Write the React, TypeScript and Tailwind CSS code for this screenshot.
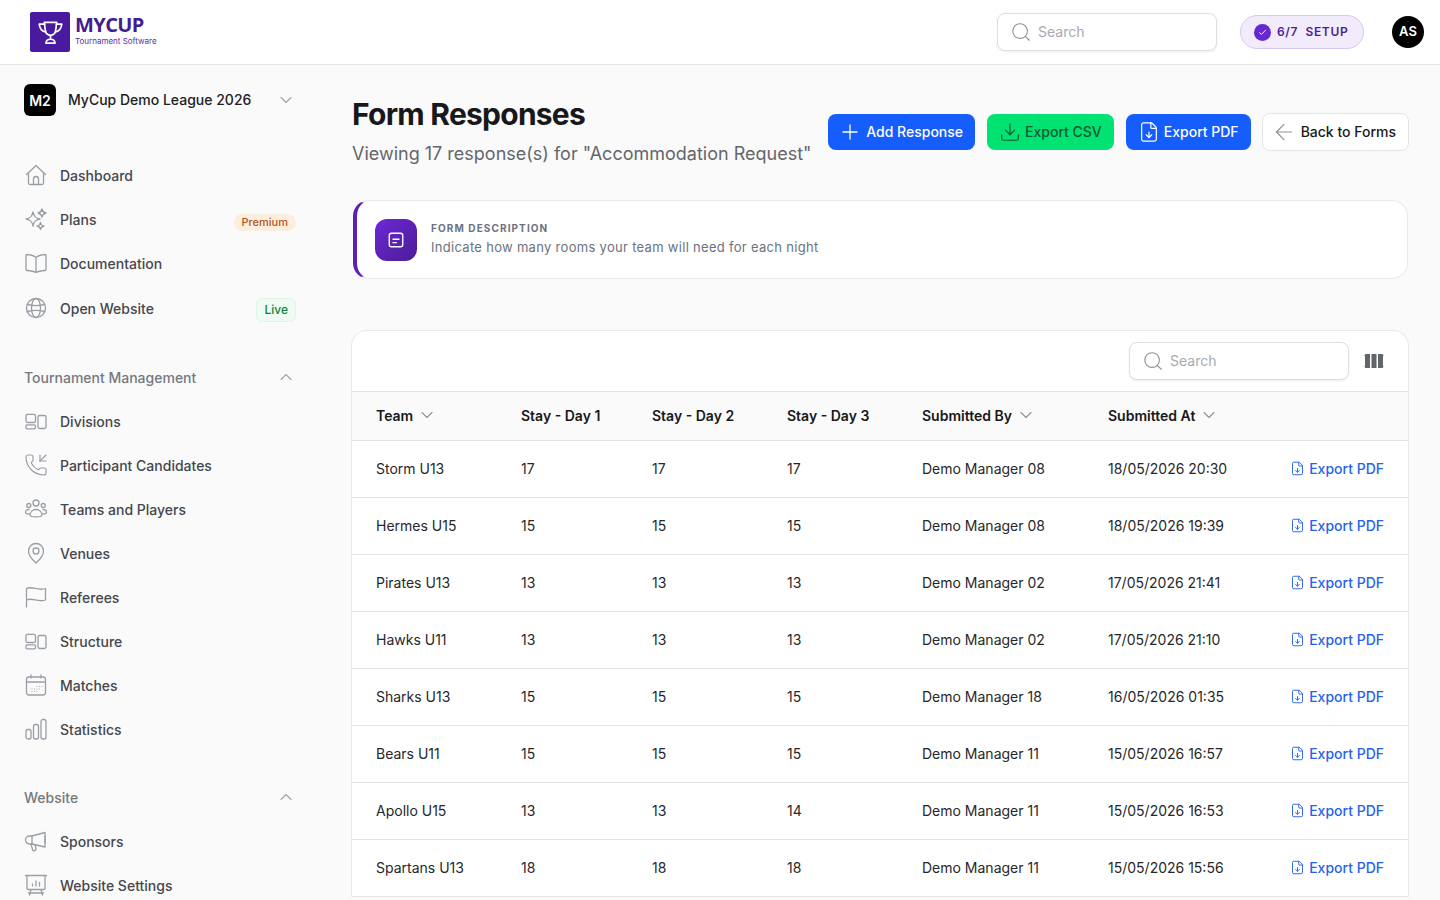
import { ChevronDown, ChevronUp, Plus, Download, ArrowLeft, Search, Check, FileDown, PhoneIncoming } from "lucide-react";
import type { ReactNode } from "react";

const Ico = ({ children, className = "text-[#9a9ea6]" }: { children: ReactNode; className?: string }) => (
  <svg viewBox="0 0 24 24" fill="none" stroke="currentColor" strokeWidth="1.3" strokeLinecap="round" strokeLinejoin="round" className={`h-6 w-6 shrink-0 ${className}`}>
    {children}
  </svg>
);

const HomeIcon = () => (
  <Ico>
    <path d="M2.500 11.500 12 2.500l9.500 9M4.500 10v10a1.500 1.500 0 0 0 1.500 1.500h12a1.500 1.500 0 0 0 1.500-1.500V10" />
    <path d="M9.500 21.500V16a2.500 2.500 0 0 1 5 0v5.500" />
  </Ico>
);
const SparkIcon = () => (
  <Ico>
    <path d="M9 5c.9 4.500 2.500 6.100 7 7-4.500.9-6.100 2.500-7 7-.9-4.500-2.500-6.100-7-7 4.500-.9 6.100-2.500 7-7Z" />
    <path d="M18 2c.5 2.500 1.500 3.500 4 4-2.500.5-3.500 1.500-4 4-.5-2.500-1.500-3.500-4-4 2.500-.5 3.500-1.500 4-4Z" />
    <path d="M16.500 15.500c.4 2.200 1.300 3.100 3.500 3.500-2.200.4-3.100 1.300-3.500 3.500-.4-2.200-1.300-3.100-3.500-3.500 2.200-.4 3.100-1.300 3.500-3.500Z" />
  </Ico>
);
const BookIcon = () => (
  <Ico>
    <path d="M12 6.500v15M12 6.500C10 4.500 7 3.800 3 3.500c-.5 0-1 .4-1 1v14c0 .5.400 1 1 1 4 .2 7 .8 9 2 2-1.200 5-1.800 9-2 .6 0 1-.5 1-1v-14c0-.6-.5-1-1-1-4 .3-7 1-9 3Z" />
  </Ico>
);
const GlobeIcon = () => (
  <Ico>
    <circle cx="12" cy="12" r="9.500" />
    <ellipse cx="12" cy="12" rx="4.500" ry="9.500" />
    <path d="M3.200 8.500c5 1.300 12.600 1.300 17.600 0M3.200 15.500c5-1.300 12.600-1.300 17.600 0" />
  </Ico>
);
const LayoutIcon = () => (
  <Ico>
    <rect x="2" y="5.300" width="9.500" height="8.200" rx="1.500" />
    <rect x="2" y="15.800" width="9.500" height="4" rx="1.300" />
    <rect x="14" y="6.500" width="8" height="13" rx="1.800" />
  </Ico>
);
const TeamIcon = () => (
  <Ico>
    <circle cx="12" cy="6" r="3" />
    <circle cx="4.800" cy="8.500" r="2" />
    <circle cx="19.200" cy="8.500" r="2" />
    <path d="M6 18c0-3 2.500-5.500 6-5.500s6 2.500 6 5.500c0 2.500-12 2.500-12 0Z" />
    <path d="M5 12.500c-2 0-3.500 1.300-3.500 3 0 1 1.500 1.500 3.500 1.500M19 12.500c2 0 3.500 1.300 3.500 3 0 1-1.500 1.500-3.500 1.500" />
  </Ico>
);
const PinIcon = () => (
  <Ico>
    <path d="M12 22c-4-3.500-7.500-7.500-7.500-12a7.500 7.500 0 0 1 15 0c0 4.500-3.500 8.500-7.500 12Z" />
    <circle cx="12" cy="10" r="3" />
  </Ico>
);
const FlagIcon = () => (
  <Ico>
    <path d="M2.500 22V3.500c6-3 11.500 3 19 0V15c-7.500 3-13-3-19 0" />
  </Ico>
);
const CalIcon = () => (
  <Ico>
    <rect x="2.500" y="4" width="19" height="18" rx="2.500" />
    <path d="M2.500 9h19M7 2v3M17 2v3" />
    <path d="M8 16v.01M10.500 16v.01M13 16v.01M15.500 16v.01M8 18.500v.01M10.500 18.500v.01M13 18.500v.01M15.500 13.500v.01M13 13.500v.01M18 13.500v.01" strokeWidth="1.100" />
  </Ico>
);
const BarsIcon = () => (
  <Ico>
    <rect x="2" y="12.500" width="5" height="9.500" rx="2" />
    <rect x="9.500" y="7.500" width="5" height="14.500" rx="2" />
    <rect x="17" y="2.500" width="5" height="19.500" rx="2" />
  </Ico>
);
const MegaIcon = () => (
  <Ico>
    <path d="M21 3.500v14.500L8 15H5.500a3.500 3.500 0 0 1 0-8H8l13-3.500Z" />
    <path d="M8 7v8M7 15l1.500 5.500c.5 2 3.500 1.500 3.500-.5l-.8-3.800" />
    <path d="M21 7v7" />
  </Ico>
);
const BoardIcon = () => (
  <Ico>
    <path d="M1.500 2.500h21M3 2.500v13a1 1 0 0 0 1 1h16a1 1 0 0 0 1-1v-13M7 16.500 5.500 22M17 16.500l1.500 5.500M4.500 20h15" />
    <path d="M8.500 13v-2M12 13V8M15.500 13v-3.500" />
  </Ico>
);

const NavItem = ({ icon, label, right }: { icon: ReactNode; label: string; right?: ReactNode }) => (
  <div className="flex h-6 items-center justify-between">
    <div className="flex items-center gap-3">
      {icon}
      <span className="text-[14px] font-medium text-[#45474d]">{label}</span>
    </div>
    {right}
  </div>
);

const GroupTitle = ({ label }: { label: string }) => (
  <div className="flex h-6 items-center justify-between">
    <span className="text-[14px] font-medium text-[#75787f]">{label}</span>
    <ChevronUp className="h-5 w-5 text-[#a1a4ab]" strokeWidth={1.3} />
  </div>
);

const Sidebar = () => (
  <aside className="w-[320px] shrink-0 px-6 pt-[19px]">
    <div className="flex items-center">
      <div className="flex h-8 w-8 items-center justify-center rounded-md bg-black text-[14px] font-semibold text-white">M2</div>
      <span className="mb-[2px] ml-3 text-[14px] font-medium text-[#1f2024]">MyCup Demo League 2026</span>
      <ChevronDown className="ml-auto h-5 w-5 text-[#a1a4ab]" strokeWidth={1.3} />
    </div>
    <div className="mt-[47px] flex flex-col gap-5">
      <NavItem icon={<HomeIcon />} label="Dashboard" />
      <NavItem
        icon={<SparkIcon />}
        label="Plans"
        right={<span className="mt-[6px] rounded-full bg-[#fbeedd] px-2 py-[1px] text-[11px] font-medium leading-[15px] text-[#b4561f]">Premium</span>}
      />
      <NavItem icon={<BookIcon />} label="Documentation" />
      <div className="mt-px">
        <NavItem
          icon={<GlobeIcon />}
          label="Open Website"
          right={<span className="mt-[3px] rounded-md border border-[#dcf5e4] bg-[#eefbf3] px-[7px] py-[2px] text-[12px] font-medium leading-[18px] text-[#15803d]">Live</span>}
        />
      </div>
    </div>
    <div className="mt-[45px] flex flex-col gap-5">
      <GroupTitle label="Tournament Management" />
      <NavItem icon={<LayoutIcon />} label="Divisions" />
      <NavItem icon={<PhoneIncoming className="h-6 w-6 shrink-0 text-[#9a9ea6]" strokeWidth={1.2} />} label="Participant Candidates" />
      <NavItem icon={<TeamIcon />} label="Teams and Players" />
      <NavItem icon={<PinIcon />} label="Venues" />
      <NavItem icon={<FlagIcon />} label="Referees" />
      <NavItem icon={<LayoutIcon />} label="Structure" />
      <NavItem icon={<CalIcon />} label="Matches" />
      <NavItem icon={<BarsIcon />} label="Statistics" />
    </div>
    <div className="mt-[44px] flex flex-col gap-5">
      <GroupTitle label="Website" />
      <NavItem icon={<MegaIcon />} label="Sponsors" />
      <NavItem icon={<BoardIcon />} label="Website Settings" />
    </div>
  </aside>
);

const SearchBox = () => (
  <div className="flex h-[38px] w-[220px] items-center gap-[6px] rounded-lg border border-[#dedfe3] bg-white px-3 shadow-[0_1px_2px_rgba(0,0,0,0.08)]">
    <Search className="h-[22px] w-[22px] text-[#8f9299]" strokeWidth={1.2} />
    <span className="mb-[2px] text-[14px] text-[#a9abb0]">Search</span>
  </div>
);

const Header = () => (
  <header className="flex h-[65px] shrink-0 items-center border-b border-[#e4e4e7] bg-white pl-[30px] pr-4">
    <div className="flex h-10 w-10 items-center justify-center rounded-[2px] bg-[#4a1a9e]">
      <svg viewBox="0 0 24 24" fill="none" stroke="white" strokeWidth="1.500" strokeLinecap="round" strokeLinejoin="round" className="h-[27px] w-[27px]">
        <path d="M6.500 3h11l-.8 6.500c-.4 3-2.200 5-4.700 5s-4.300-2-4.700-5L6.500 3Z" />
        <path d="M6.700 4.500H2c.3 3.500 2 6 5.500 7M17.300 4.500H22c-.3 3.500-2 6-5.500 7" />
        <path d="M12 14.500V18M8 21.500c0-2 1.500-3.500 4-3.500s4 1.500 4 3.500H8Z" />
      </svg>
    </div>
    <div className="mb-[3px] ml-[5px] flex flex-col">
      <span className="text-[20px] font-bold leading-[21px] tracking-[-0.03em] text-[#431c93]" style={{ fontFamily: "'Open Sans', sans-serif" }}>MYCUP</span>
      <span className="text-[8px] leading-[12px] text-[#5a2ea8]">Tournament Software</span>
    </div>
    <div className="ml-auto">
      <SearchBox />
    </div>
    <div className="ml-[23px] flex h-[34px] w-[124px] items-center gap-[6px] rounded-full border border-[#d6c8f2] bg-[#f2ebfc] pl-[13px]">
      <span className="flex h-[17px] w-[17px] items-center justify-center rounded-full bg-[#6429cf]">
        <Check className="h-[9px] w-[9px] text-white" strokeWidth={2.500} />
      </span>
      <span className="text-[12px] font-semibold tracking-[0.055em] text-[#4c1d95]">6/7&nbsp; SETUP</span>
    </div>
    <div className="ml-[28px] flex h-8 w-8 items-center justify-center rounded-full bg-black text-[13px] font-semibold text-white">AS</div>
  </header>
);

const btn = "flex h-9 items-center gap-1 whitespace-nowrap rounded-lg pb-px text-[14px] font-medium";

const TitleRow = () => (
  <div className="flex items-start justify-between">
    <div>
      <h1 className="-mt-px text-[30px] font-bold leading-[36px] tracking-[-0.025em] text-[#18181b]">Form Responses</h1>
      <p className="mt-2 whitespace-nowrap text-[18px] leading-[28px] text-[#64666c]">Viewing 17 response(s) for "Accommodation Request"</p>
    </div>
    <div className="-mr-px mt-4 flex items-center">
      <button className={`${btn} bg-[#155dfc] pl-[10px] pr-3 text-white`}>
        <Plus className="h-6 w-6" strokeWidth={1.300} />
        Add Response
      </button>
      <button className={`${btn} ml-3 bg-[#00e272] pl-3 pr-3 text-[#0a5a33]`}>
        <Download className="h-[22px] w-[22px]" strokeWidth={1.300} />
        Export CSV
      </button>
      <button className={`${btn} ml-3 bg-[#155dfc] pl-3 pr-3 text-white`}>
        <FileDown className="h-[22px] w-[22px]" strokeWidth={1.300} />
        Export PDF
      </button>
      <button className="ml-[11px] flex h-[38px] items-center gap-1 whitespace-nowrap rounded-lg border border-[#e4e4e7] bg-white pb-px pl-2 pr-3 text-[14px] font-medium text-[#18181b]">
        <ArrowLeft className="h-[26px] w-[26px] text-[#8f9299]" strokeWidth={1.100} />
        Back to Forms
      </button>
    </div>
  </div>
);

const DescCard = () => (
  <div className="ml-px mt-8 flex h-[79px] items-center rounded-2xl border border-l-4 border-[#e9e9ec] border-l-[#5b21b6] bg-white pl-[18px]">
    <div className="flex h-[42px] w-[42px] items-center justify-center rounded-xl bg-gradient-to-br from-[#6d28d9] to-[#4c1d95]">
      <svg viewBox="0 0 24 24" fill="none" stroke="white" strokeWidth="1.800" strokeLinecap="round" className="h-[18px] w-[18px]">
        <rect x="3" y="3" width="18" height="18" rx="3" />
        <path d="M8 11h8M8 15.500h4.500" />
      </svg>
    </div>
    <div className="ml-[14px] pb-[2px]">
      <div className="text-[10px] font-bold leading-[16px] tracking-[0.11em] text-[#6b7280]">FORM DESCRIPTION</div>
      <div className="mt-px text-[13px] leading-[20px] tracking-[0.3px] text-[#6b7280]">Indicate how many rooms your team will need for each night</div>
    </div>
  </div>
);

const rows = [
  ["Storm U13", "17", "17", "17", "Demo Manager 08", "18/05/2026 20:30"],
  ["Hermes U15", "15", "15", "15", "Demo Manager 08", "18/05/2026 19:39"],
  ["Pirates U13", "13", "13", "13", "Demo Manager 02", "17/05/2026 21:41"],
  ["Hawks U11", "13", "13", "13", "Demo Manager 02", "17/05/2026 21:10"],
  ["Sharks U13", "15", "15", "15", "Demo Manager 18", "16/05/2026 01:35"],
  ["Bears U11", "15", "15", "15", "Demo Manager 11", "15/05/2026 16:57"],
  ["Apollo U15", "13", "13", "14", "Demo Manager 11", "15/05/2026 16:53"],
  ["Spartans U13", "18", "18", "18", "Demo Manager 11", "15/05/2026 15:56"],
];

const heads: [string, boolean, string][] = [
  ["Team", true, "w-[145px]"],
  ["Stay - Day 1", false, "w-[131px]"],
  ["Stay - Day 2", false, "w-[135px]"],
  ["Stay - Day 3", false, "w-[135px]"],
  ["Submitted By", true, "w-[186px]"],
  ["Submitted At", true, "w-[182px]"],
];

const DataTable = () => (
  <div className="-mx-px mt-[51px] rounded-t-2xl border border-b-0 border-[#e9e9ec] bg-white">
    <div className="flex h-[60px] items-center justify-end gap-[15px] pr-6">
      <SearchBox />
      <svg viewBox="0 0 20 20" className="h-5 w-5 text-[#63656c]" fill="currentColor">
        <path d="M1 5.500A1.500 1.500 0 0 1 2.500 3H6v14H2.500A1.500 1.500 0 0 1 1 14.500v-9ZM7.500 3h5v14h-5V3ZM14 3h3.500A1.500 1.500 0 0 1 19 5.500v9a1.500 1.500 0 0 1-1.500 2.500H14V3Z" />
      </svg>
    </div>
    <table className="w-full table-fixed border-collapse text-left">
      <thead>
        <tr className="h-[49px] border-y border-[#e4e4e7] bg-[#fafafa]">
          {heads.map(([label, sort, w]) => (
            <th key={label} className={`${w} pb-[2px] pl-6 text-[14px] font-semibold text-[#18181b]`}>
              <span className="flex items-center gap-1">
                {label}
                {sort && <ChevronDown className="h-5 w-5 text-[#8f9299]" strokeWidth={1.300} />}
              </span>
            </th>
          ))}
          <th />
        </tr>
      </thead>
      <tbody>
        {rows.map((row) => (
          <tr key={row[0]} className="h-[57px] border-b border-[#e4e4e7]">
            {row.map((cell, i) => (
              <td key={i} className="pb-[2px] pl-6 text-[14px] text-[#27272a]">{cell}</td>
            ))}
            <td className="pb-[2px] pr-6">
              <span className="flex items-center justify-end gap-1 text-[14px] font-medium text-[#2563eb]">
                <FileDown className="h-[15px] w-[15px]" strokeWidth={1.500} />
                Export PDF
              </span>
            </td>
          </tr>
        ))}
      </tbody>
    </table>
  </div>
);

export default function App() {
  return (
    <div className="flex h-screen flex-col overflow-hidden bg-[#fafafa]" style={{ fontFamily: "Inter, sans-serif" }}>
      <Header />
      <div className="flex min-h-0 flex-1">
        <Sidebar />
        <main className="flex-1 pl-8 pr-8 pt-8">
          <TitleRow />
          <DescCard />
          <DataTable />
        </main>
      </div>
    </div>
  );
}
